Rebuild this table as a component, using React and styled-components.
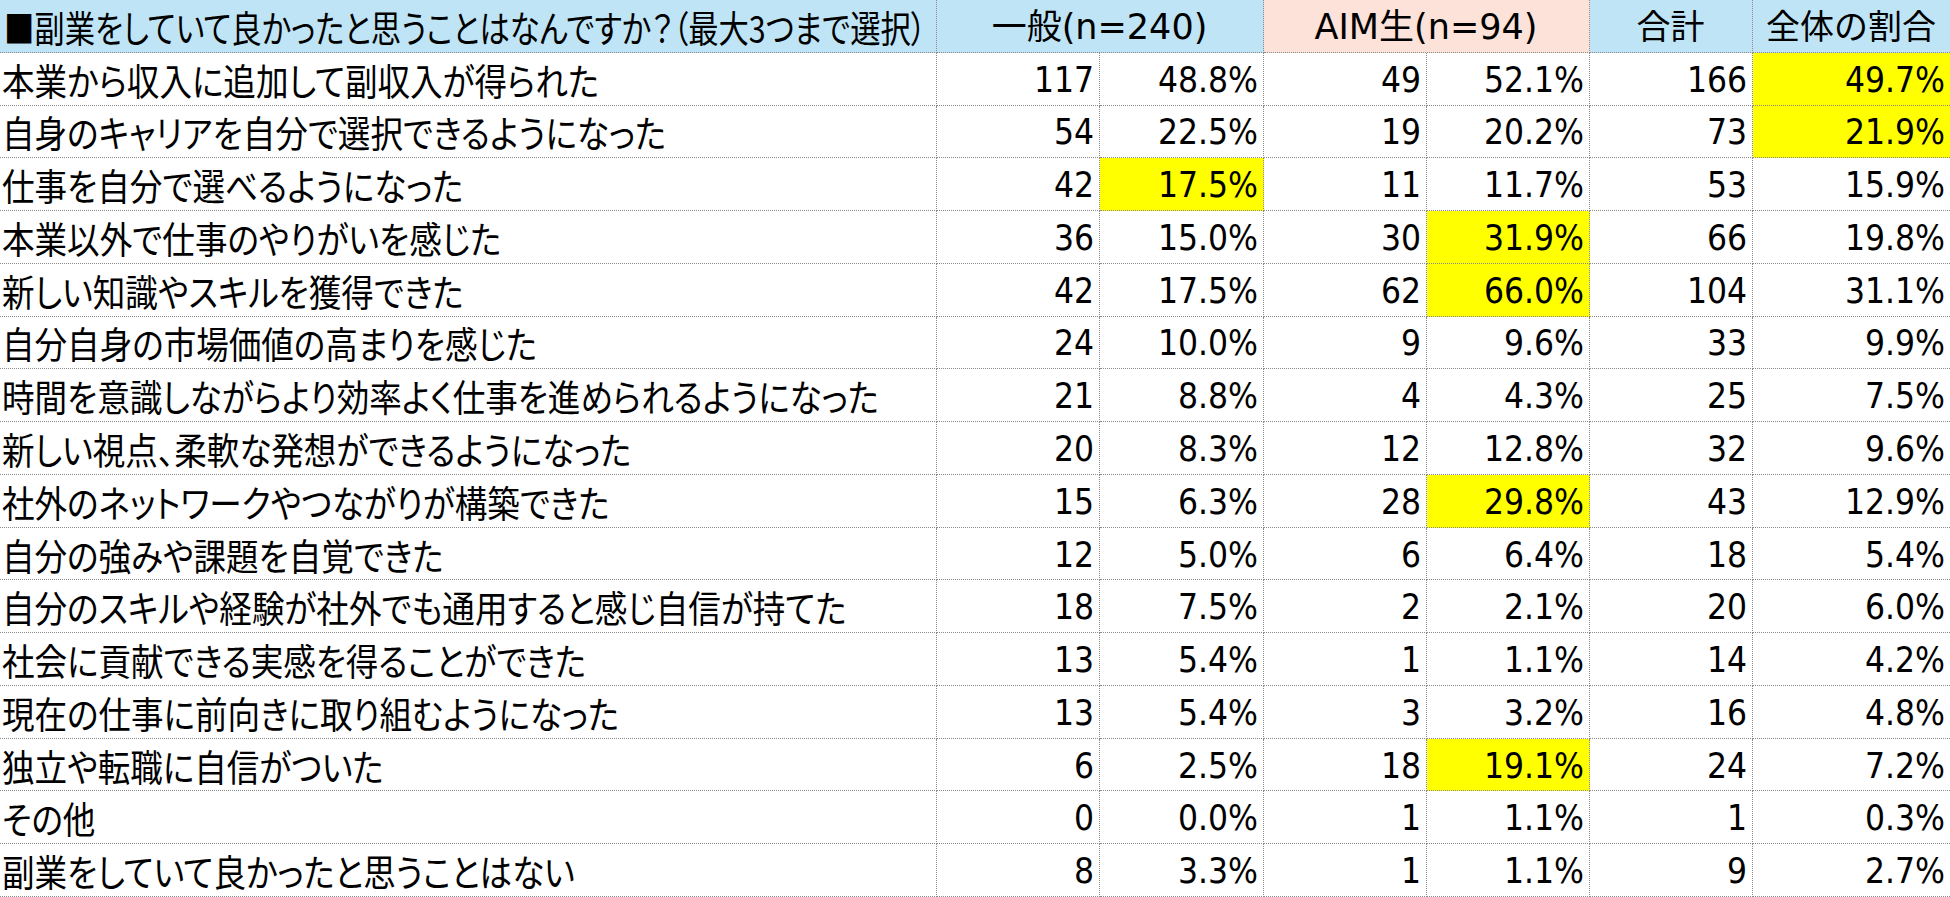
import React from 'react';
import styled, { createGlobalStyle } from 'styled-components';

const GlobalStyle = createGlobalStyle`
  html, body {
    margin: 0;
    padding: 0;
    background: #ffffff;
  }
  body {
    font-family: "Noto Sans CJK JP", "Noto Sans", sans-serif;
    color: #000000;
  }
`;

// marks: indexes of highlighted value cells (0..5)
const rows = [
  ['本業から収入に追加して副収入が得られた', [117, '48.8%', 49, '52.1%', 166, '49.7%'], [5]],
  ['自身のキャリアを自分で選択できるようになった', [54, '22.5%', 19, '20.2%', 73, '21.9%'], [5]],
  ['仕事を自分で選べるようになった', [42, '17.5%', 11, '11.7%', 53, '15.9%'], [1]],
  ['本業以外で仕事のやりがいを感じた', [36, '15.0%', 30, '31.9%', 66, '19.8%'], [3]],
  ['新しい知識やスキルを獲得できた', [42, '17.5%', 62, '66.0%', 104, '31.1%'], [3]],
  ['自分自身の市場価値の高まりを感じた', [24, '10.0%', 9, '9.6%', 33, '9.9%'], []],
  ['時間を意識しながらより効率よく仕事を進められるようになった', [21, '8.8%', 4, '4.3%', 25, '7.5%'], []],
  ['新しい視点、柔軟な発想ができるようになった', [20, '8.3%', 12, '12.8%', 32, '9.6%'], []],
  ['社外のネットワークやつながりが構築できた', [15, '6.3%', 28, '29.8%', 43, '12.9%'], [3]],
  ['自分の強みや課題を自覚できた', [12, '5.0%', 6, '6.4%', 18, '5.4%'], []],
  ['自分のスキルや経験が社外でも通用すると感じ自信が持てた', [18, '7.5%', 2, '2.1%', 20, '6.0%'], []],
  ['社会に貢献できる実感を得ることができた', [13, '5.4%', 1, '1.1%', 14, '4.2%'], []],
  ['現在の仕事に前向きに取り組むようになった', [13, '5.4%', 3, '3.2%', 16, '4.8%'], []],
  ['独立や転職に自信がついた', [6, '2.5%', 18, '19.1%', 24, '7.2%'], [3]],
  ['その他', [0, '0.0%', 1, '1.1%', 1, '0.3%'], []],
  ['副業をしていて良かったと思うことはない', [8, '3.3%', 1, '1.1%', 9, '2.7%'], []],
];

const BLUE = '#bfe4f6';
const PINK = '#fce2d8';
const YELLOW = '#ffff00';

const Sheet = styled.div`
  display: grid;
  grid-template-columns: 937px 163px 164px 163px 163px 163px 1fr;
  grid-template-rows: repeat(17, 1fr);
  width: 1950px;
  height: 897px;
  overflow: hidden;
`;

const Cell = styled.div`
  display: flex;
  align-items: center;
  justify-content: ${({ $align }) => $align || 'flex-end'};
  padding: 3px 5px 0 4px;
  font-family: "DejaVu Sans Condensed", "DejaVu Sans", "Noto Sans CJK JP", sans-serif;
  font-stretch: condensed;
  font-size: 35px;
  line-height: 1;
  white-space: nowrap;
  overflow: hidden;
  background: ${({ $bg }) => $bg || '#ffffff'};
  border-bottom: 1px dotted #8a8a8a;
  border-right: ${({ $noRight }) => ($noRight ? 'none' : '1px dotted #8a8a8a')};
  grid-column: ${({ $span }) => ($span ? `span ${$span}` : 'auto')};
`;

const HeadCell = styled(Cell)`
  background: ${({ $bg }) => $bg || BLUE};
  font-family: "DejaVu Sans", "Noto Sans CJK JP", sans-serif;
  font-stretch: normal;
  font-size: ${({ $size }) => $size || 35}px;
`;

const Label = styled(Cell)`
  justify-content: flex-start;
  padding-left: 2px;
`;

// Meiryo UI style narrow glyphs: tall text squeezed horizontally
const Narrow = styled.span`
  display: inline-block;
  flex-shrink: 0;
  font-family: "Noto Sans CJK JP", sans-serif;
  font-feature-settings: "palt";
  font-size: 37px;
  transform: scaleX(${({ $scale }) => $scale || 0.88});
  transform-origin: left center;
`;

export default function App() {
  return (
    <>
      <GlobalStyle />
      <Sheet>
        <HeadCell $align="flex-start">
          <Narrow $scale={0.82}>
            ■副業をしていて良かったと思うことはなんですか？（最大3つまで選択）
          </Narrow>
        </HeadCell>
        <HeadCell $span={2} $align="center">
          一般(n=240)
        </HeadCell>
        <HeadCell $span={2} $align="center" $bg={PINK}>
          AIM生(n=94)
        </HeadCell>
        <HeadCell $align="center" $size={34}>
          合計
        </HeadCell>
        <HeadCell $align="center" $size={34} $noRight>
          全体の割合
        </HeadCell>
        {rows.map(([label, vals, marks]) => (
          <React.Fragment key={label}>
            <Label>
              <Narrow>{label}</Narrow>
            </Label>
            {vals.map((v, i) => (
              <Cell
                key={i}
                $bg={marks.includes(i) ? YELLOW : undefined}
                $noRight={i === 5}
              >
                {v}
              </Cell>
            ))}
          </React.Fragment>
        ))}
      </Sheet>
    </>
  );
}
